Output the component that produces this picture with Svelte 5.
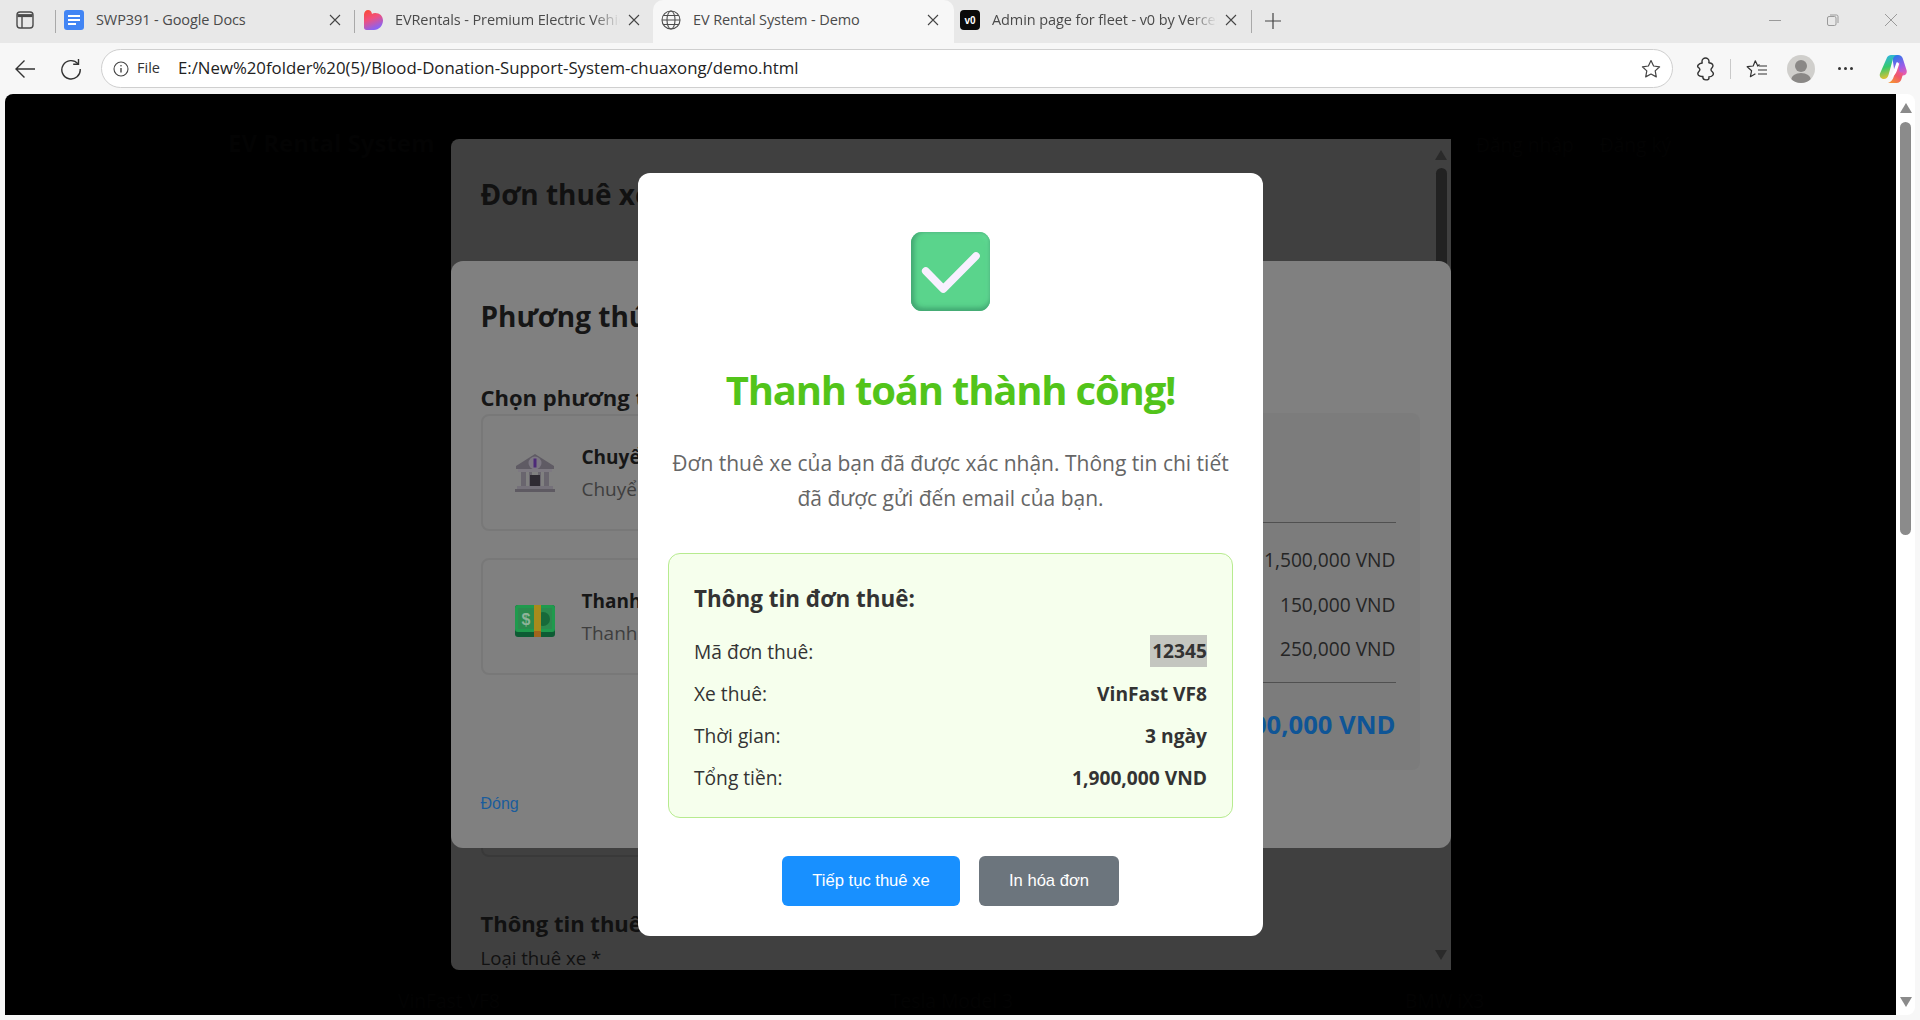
<script>
  const tabs = [
    { id: 'docs', title: 'SWP391 - Google Docs', fade: false },
    { id: 'heart', title: 'EVRentals - Premium Electric Vehicle Rental', fade: true },
    { id: 'globe', title: 'EV Rental System - Demo', fade: false, active: true },
    { id: 'v0', title: 'Admin page for fleet - v0 by Vercel', fade: true }
  ];

  const rows = [
    { label: 'Mã đơn thuê:', value: '12345', selected: true },
    { label: 'Xe thuê:', value: 'VinFast VF8' },
    { label: 'Thời gian:', value: '3 ngày' },
    { label: 'Tổng tiền:', value: '1,900,000 VND' }
  ];

  const prices = ['1,500,000 VND', '150,000 VND', '250,000 VND'];
</script>

<div class="window">
  <div class="tabstrip">
    <svg class="sidebar-ico" width="18" height="18" viewBox="0 0 18 18" fill="none" stroke="#4a4a4a" stroke-width="1.4">
      <rect x="1" y="1" width="16" height="16" rx="3" />
      <path d="M1.500 4.600h15" stroke-width="3" />
      <path d="M6 5v12" />
    </svg>
    {#each tabs as t}
      <div class="sep" class:hide={t.active || t.id === 'v0'}></div>
      <div class="tab tab-{t.id}" class:active={t.active}>
        <span class="fav">
          {#if t.id === 'docs'}
            <svg width="20" height="20" viewBox="0 0 20 20">
              <rect width="20" height="20" rx="3" fill="#4285f4" />
              <path d="M4 5h12v2H4zM4 9h12v2H4zM4 13h8v2H4z" fill="#fff" />
            </svg>
          {:else if t.id === 'heart'}
            <svg width="20" height="20" viewBox="0 0 20 20">
              <defs>
                <linearGradient id="hg" x1="0" y1="0" x2="0.4" y2="1">
                  <stop offset="0" stop-color="#fb4a2e" />
                  <stop offset="0.5" stop-color="#f0507e" />
                  <stop offset="1" stop-color="#8c62f0" />
                </linearGradient>
              </defs>
              <path d="M1 4.500C1 1.800 3 0 5 0c2.200 0 3.600 1.600 4 4 .9-.7 1.900-1 3.200-1C16.800 3 20 6 20 10.500c0 5-4 9.500-9 9.500H3.500C2 20 1 19 1 17.500z" fill="url(#hg)" />
            </svg>
          {:else if t.id === 'globe'}
            <svg width="20" height="20" viewBox="0 0 20 20" fill="none" stroke="#4d4d4d" stroke-width="1.1">
              <circle cx="10" cy="10" r="9" />
              <ellipse cx="10" cy="10" rx="4" ry="9" />
              <path d="M1 10h18M2.200 5.500h15.600M2.200 14.500h15.600" />
            </svg>
          {:else}
            <svg width="20" height="20" viewBox="0 0 20 20">
              <rect width="20" height="20" rx="4" fill="#0a0a0a" />
              <text x="10" y="13.500" class="v0-mark">v0</text>
            </svg>
          {/if}
        </span>
        <span class="tab-title" class:fade={t.fade}>{t.title}</span>
        <svg class="tab-x" width="12" height="12" viewBox="0 0 12 12" stroke="#444" stroke-width="1.1">
          <path d="M1 1l10 10M11 1L1 11" />
        </svg>
      </div>
    {/each}
    <div class="sep last"></div>
    <svg class="plus" width="18" height="18" viewBox="0 0 18 18" stroke="#444" stroke-width="1.2">
      <path d="M9 1v16M1 9h16" />
    </svg>
    <div class="win-controls">
      <svg width="12" height="12" viewBox="0 0 12 12" stroke="#9a9a9a"><path d="M0 6.500h12" /></svg>
      <svg width="12" height="12" viewBox="0 0 12 12" fill="none" stroke="#9a9a9a">
        <rect x="0.500" y="2.500" width="8.500" height="9" rx="1.500" />
        <path d="M3 1h6.500A1.500 1.500 0 0 1 11 2.500V9" />
      </svg>
      <svg width="12" height="12" viewBox="0 0 12 12" stroke="#9a9a9a"><path d="M0 0l12 12M12 0L0 12" /></svg>
    </div>
  </div>

  <div class="toolbar">
    <svg class="back" width="22" height="20" viewBox="0 0 22 20" fill="none" stroke="#333" stroke-width="1.400">
      <path d="M21 10H2M10.500 1.500L2 10l8.500 8.500" />
    </svg>
    <svg class="reload" width="22" height="22" viewBox="0 0 22 22" fill="none" stroke="#333" stroke-width="1.400">
      <path d="M18 5.800A9.200 9.200 0 1 0 20.200 11" />
      <path d="M18.500 1v5.300h-5.300" />
    </svg>
    <div class="addr">
      <svg class="info-ico" width="16" height="16" viewBox="0 0 16 16" fill="none" stroke="#444" stroke-width="1.100">
        <circle cx="8" cy="8" r="7" />
        <path d="M8 7v4.500" stroke-width="1.400" />
        <circle cx="8" cy="4.800" r="0.800" fill="#444" stroke="none" />
      </svg>
      <span class="file">File</span>
      <span class="url">E:/New%20folder%20(5)/Blood-Donation-Support-System-chuaxong/demo.html</span>
      <svg class="star" width="20" height="20" viewBox="0 0 20 20" fill="none" stroke="#444" stroke-width="1.200" stroke-linejoin="round">
        <path d="M10 1.500l2.600 5.500 6 .8-4.400 4.100 1.100 6L10 15l-5.300 2.900 1.100-6L1.400 7.800l6-.8z" />
      </svg>
    </div>
    <div class="tools">
      <svg class="t-puzzle" width="20" height="24" viewBox="0 0 20 24" fill="none" stroke="#333" stroke-width="1.400" stroke-linejoin="round">
        <path d="M7 4.500C7 2.500 8.700 1 10.500 1S14 2.500 14 4.500c0 .6 0 .8-.2 1.200 1.600.1 3 .7 3.700 1.600.6.900.5 2.200-.3 3.200-.8.900-1.200 1.500-1.200 2.200 0 .8.500 1.400 1.300 2.100 1.100 1 1.200 2.600.4 3.600-.8 1-2.200 1.500-3.900 1.500.2.500.2.700.2 1 0 1.100-1.300 2-3.100 2s-3.100-1.200-3.100-2.800c0-.2 0-.4.100-.6-1.900.2-3.500-.2-4.400-1.200-.9-1.100-.8-2.500.2-3.600.8-.9 1.200-1.400 1.200-2.100 0-.8-.5-1.400-1.300-2.200C2.500 10.400 2.400 9 3.200 8c.8-1 2.300-1.800 4-2C7.100 5.500 7 5 7 4.500z" />
      </svg>
      <div class="t-sep"></div>
      <svg class="t-fav" width="22" height="20" viewBox="0 0 22 20" fill="none" stroke="#333" stroke-width="1.200" stroke-linejoin="round">
        <path d="M13.500 5.500L11.800 7 9.300 1.800 7.200 7l-6 .7 4.400 4-1.200 6 5-3" />
        <path d="M13 7h8M12 11h9M12 15h9" />
      </svg>
      <div class="avatar">
        <span class="a-head"></span>
        <span class="a-body"></span>
      </div>
      <span class="dots"><i></i><i></i><i></i></span>
      <svg class="t-copilot" width="28" height="30" viewBox="0 0 28 30">
        <defs>
          <linearGradient id="cp1" x1="0.300" y1="0" x2="0.500" y2="1">
            <stop offset="0" stop-color="#2fb4ea" />
            <stop offset="0.5" stop-color="#37c96b" />
            <stop offset="1" stop-color="#f4c02e" />
          </linearGradient>
          <linearGradient id="cp2" x1="0.300" y1="0" x2="0.700" y2="1">
            <stop offset="0" stop-color="#2a78ea" />
            <stop offset="0.6" stop-color="#9a5ce8" />
            <stop offset="1" stop-color="#e85bb0" />
          </linearGradient>
          <linearGradient id="cp3" x1="0.800" y1="0" x2="0.300" y2="1">
            <stop offset="0" stop-color="#d85ad0" />
            <stop offset="0.6" stop-color="#f0586a" />
            <stop offset="1" stop-color="#f59035" />
          </linearGradient>
        </defs>
        <path d="M13 1h6c2.500 0 4 1.300 4.800 3.500L27.500 16c1 3-.8 5.500-3.800 5.500H16z" fill="url(#cp2)" />
        <path d="M8 3.500C8.700 2 10.500 1 12 1h6c-2 .5-3.300 1.800-4 3.800L9.500 21c-.8 2.800-2.300 4-4.500 4C2 25 0 22.500 1 19.500z" fill="url(#cp1)" />
        <path d="M21 8.500c-1 .2-2 1-2.500 2.500l-3.500 11c-1 3.500-3 6-6 7h8.500c2.500 0 4-1.200 4.800-3.500l2.200-7c-2 1-4.500-.5-4.500-3z" fill="url(#cp3)" />
        <path d="M17.500 8.500L12 23.500c3-1.500 4.800-3.500 5.800-6.500l2.200-6.500c.3-1.200-1.500-3-2.500-2z" fill="#fff" />
      </svg>
    </div>
  </div>

  <div class="viewport">
    <div class="page">
      <div class="dim-brand">EV Rental System</div>
      <div class="dim-nav"><span>Đăng nhập</span><span>Đăng ký</span></div>
      <div class="dim-cars"><span>VinFast VF8</span><span>Tesla Model 3</span><span>BMW iX3</span></div>

      <div class="overlay">
        <div class="rental-panel">
          <h2>Đơn thuê xe</h2>
          <div class="ghost-card"></div>
          <h3>Thông tin thuê</h3>
          <p>Loại thuê xe *</p>
          <div class="inner-scroll">
            <span class="arrow up"></span>
            <span class="thumb"></span>
            <span class="arrow down"></span>
          </div>
        </div>
      </div>

      <div class="overlay">
        <div class="pay-panel">
          <h2>Phương thức thanh toán</h2>
          <div class="pay-cols">
            <div class="methods">
              <h3>Chọn phương thức thanh toán</h3>
              <div class="method">
                <svg width="40" height="38" viewBox="0 0 40 38">
                  <path d="M20 0L39 12v3H1v-3z" fill="#5f5b64" />
                  <circle cx="20" cy="9" r="6.500" fill="#7c7782" />
                  <path d="M20 4.500v9" stroke="#4d2a78" stroke-width="3" />
                  <rect x="3" y="15" width="34" height="3" fill="#7d7981" />
                  <path d="M6 18h5v14H6zM14 18h3v14h-3zM23 18h3v14h-3zM29 18h5v14h-5z" fill="#69656e" />
                  <rect x="15" y="21" width="10" height="11" fill="#2f2b33" />
                  <rect x="2" y="32" width="36" height="3" fill="#75717a" />
                  <rect y="35" width="40" height="3" fill="#5e5a62" />
                </svg>
                <div>
                  <b>Chuyển khoản ngân hàng</b>
                  <span>Chuyển khoản qua ATM</span>
                </div>
              </div>
              <div class="method">
                <svg class="cash" width="40" height="32" viewBox="0 0 40 32">
                  <rect width="40" height="32" rx="3" fill="#0d5c34" />
                  <rect width="40" height="27" rx="3" fill="#1f9a4d" />
                  <rect x="3" y="3" width="34" height="21" fill="#2b8a4e" />
                  <circle cx="28" cy="14" r="7" fill="#176a3a" />
                  <text x="11" y="20" class="bill">$</text>
                  <rect x="19" y="0" width="7" height="32" fill="#a88b1c" />
                  <rect x="19" y="26" width="7" height="6" fill="#a0651c" />
                </svg>
                <div>
                  <b>Thanh toán tiền mặt</b>
                  <span>Thanh toán khi nhận xe</span>
                </div>
              </div>
              <a class="close-link" href="#top">Đóng</a>
            </div>
            <div class="summary">
              <h3>Tóm tắt</h3>
              <hr />
              {#each prices as p}
                <div class="price">{p}</div>
              {/each}
              <hr class="second" />
              <div class="total">1,900,000 VND</div>
            </div>
          </div>
        </div>
      </div>

      <div class="overlay">
        <div class="modal">
          <div class="check">
            <svg width="79" height="79" viewBox="0 0 79 79" fill="none" stroke="#f8f0ff" stroke-width="7.600" stroke-linecap="round" stroke-linejoin="round">
              <path d="M14.700 39L32.300 57 65 24" />
            </svg>
          </div>
          <h1>Thanh toán thành công!</h1>
          <p class="lead">Đơn thuê xe của bạn đã được xác nhận. Thông tin chi tiết đã được gửi đến email của bạn.</p>
          <div class="info">
            <h4>Thông tin đơn thuê:</h4>
            {#each rows as r}
              <div class="row">
                <span>{r.label}</span>
                <strong class:selected={r.selected}>{r.value}</strong>
              </div>
            {/each}
          </div>
          <div class="actions">
            <button class="primary">Tiếp tục thuê xe</button>
            <button class="secondary">In hóa đơn</button>
          </div>
        </div>
      </div>
    </div>
    <div class="page-scroll">
      <span class="arrow up"></span>
      <span class="thumb"></span>
      <span class="arrow down"></span>
    </div>
  </div>
</div>

<style>
  :global(body) {
    margin: 0;
    background: #f7f7f7;
    font-family: "Open Sans", "Liberation Sans", sans-serif;
  }
  .window {
    width: 1920px;
    height: 1020px;
    display: flex;
    flex-direction: column;
    overflow: hidden;
    background: #f7f7f7;
  }

  /* tabs */
  .tabstrip {
    height: 43px;
    flex: none;
    display: flex;
    align-items: center;
    background: #e8e8e8;
    padding-left: 16px;
  }
  .sidebar-ico { margin-top: -4px; margin-right: 21px; flex: none; }
  .sep { width: 1px; height: 23px; background: #a9a9a9; flex: none; margin-top: -1px; }
  .sep.hide { background: transparent; }
  .tab {
    display: flex;
    align-items: center;
    height: 43px;
    box-sizing: border-box;
    padding: 0 13px 4px 8px;
    font-size: 14.500px;
    letter-spacing: -0.1px;
    color: #4a4a4a;
    flex: none;
  }
  .tab-docs, .tab-heart { width: 298px; }
  .tab-globe { width: 301px; margin-left: -1px; padding-right: 15px; }
  .tab-v0 { width: 296px; padding-left: 5px; padding-right: 14px; }
  .tab.active {
    background: #f7f7f7;
    border-radius: 10px 10px 0 0;
  }
  .fav { width: 20px; height: 20px; flex: none; margin-right: 12px; }
  .fav svg { display: block; }
  .v0-mark { font: 700 10px "Liberation Sans", sans-serif; fill: #fff; text-anchor: middle; }
  .tab-title { flex: 1; white-space: nowrap; overflow: hidden; }
  .tab-title.fade {
    -webkit-mask-image: linear-gradient(to right, #000 88%, transparent);
    mask-image: linear-gradient(to right, #000 88%, transparent);
  }
  .tab-x { margin-left: 8px; flex: none; }
  .plus { margin-left: 12px; margin-top: -2px; flex: none; }
  .win-controls {
    margin-left: auto;
    display: flex;
    gap: 46px;
    padding-right: 23px;
    padding-bottom: 4px;
  }

  /* toolbar */
  .toolbar {
    height: 51px;
    flex: none;
    display: flex;
    align-items: center;
    padding-left: 14px;
    box-sizing: border-box;
    background: #f7f7f7;
  }
  .back { flex: none; }
  .reload { flex: none; margin-left: 24px; }
  .addr {
    margin-left: 19px;
    width: 1572px;
    height: 39px;
    box-sizing: border-box;
    flex: none;
    border: 1px solid #cfcfcf;
    border-radius: 20px;
    background: #fff;
    display: flex;
    align-items: center;
    padding: 0 11px 2px 11px;
  }
  .info-ico { margin-top: 2px; }
  .file { font-size: 14.500px; margin-left: 8px; color: #333; }
  .url { font-size: 16.800px; margin-left: 18px; color: #222; white-space: nowrap; }
  .star { margin-left: auto; margin-top: 2px; }
  .tools { display: flex; align-items: center; flex: none; }
  .t-puzzle { margin-left: 22px; }
  .t-sep { width: 1px; height: 20px; background: #c9c9c9; margin-left: 15px; }
  .t-fav { margin-left: 15px; }
  .avatar {
    width: 28px;
    height: 28px;
    border-radius: 50%;
    background: #d0cfcc;
    margin-left: 19px;
    position: relative;
    overflow: hidden;
    flex: none;
  }
  .a-head {
    position: absolute;
    left: 8px;
    top: 5px;
    width: 12px;
    height: 12px;
    border-radius: 50%;
    background: #8a8886;
  }
  .a-body {
    position: absolute;
    left: 4px;
    top: 18px;
    width: 20px;
    height: 14px;
    border-radius: 50%;
    background: #8a8886;
  }
  .dots { display: flex; gap: 3px; margin-left: 23px; }
  .dots i { width: 3px; height: 3px; border-radius: 50%; background: #333; }
  .t-copilot { margin-left: 26px; flex: none; }

  /* page */
  .viewport {
    height: 921px;
    flex: none;
    display: flex;
    padding-left: 5px;
  }
  .page {
    width: 1891px;
    height: 921px;
    flex: none;
    position: relative;
    background: #000;
    border-radius: 8px 0 0 0;
    overflow: hidden;
  }
  .page-scroll {
    width: 19px;
    height: 921px;
    background: #fff;
    position: relative;
    border-radius: 0 8px 8px 0;
  }
  .page-scroll .thumb {
    position: absolute;
    left: 4px;
    top: 28px;
    width: 11px;
    height: 413px;
    border-radius: 6px;
    background: #8b8b8b;
  }
  .arrow {
    position: absolute;
    width: 0;
    height: 0;
    border-left: 6px solid transparent;
    border-right: 6px solid transparent;
  }
  .page-scroll .arrow { left: 4px; }
  .page-scroll .arrow.up { top: 9px; border-bottom: 10px solid #8b8b8b; }
  .page-scroll .arrow.down { top: 903px; border-top: 10px solid #8b8b8b; }

  /* barely visible text of the page under the backdrop */
  .dim-brand, .dim-nav, .dim-cars { position: absolute; color: #030303; white-space: nowrap; font-size: 19.200px; }
  .dim-brand { left: 223px; top: 32px; font-size: 24px; font-weight: 700; }
  .dim-nav { left: 1471px; top: 37px; display: flex; gap: 26px; }
  .dim-cars { left: 393px; top: 893px; display: flex; }
  .dim-cars span:nth-child(1) { width: 492px; }
  .dim-cars span:nth-child(2) { width: 515px; }

  .overlay {
    position: absolute;
    inset: 0;
    display: flex;
    align-items: center;
    justify-content: center;
  }

  .rental-panel {
    width: 1000px;
    height: 831px;
    box-sizing: border-box;
    background: #404040;
    border-radius: 8px 0 0 8px;
    padding: 35px 30px 0;
    position: relative;
    overflow: hidden;
    color: #111;
  }
  .rental-panel h2 { margin: 0; font-size: 28px; line-height: 40px; font-weight: 700; }
  .ghost-card {
    width: 600px;
    height: 110px;
    box-sizing: border-box;
    margin-top: 533px;
    border: 2px solid #393939;
    border-top: 0;
    border-radius: 8px;
  }
  .rental-panel h3 { margin: 50px 0 0; font-size: 22px; line-height: 32px; font-weight: 700; }
  .rental-panel p { margin: 6px 0 0; font-size: 18.600px; line-height: 26px; }
  .inner-scroll { position: absolute; right: 0; top: 0; width: 19px; height: 100%; }
  .inner-scroll .thumb {
    position: absolute;
    left: 4px;
    top: 29px;
    width: 11px;
    height: 300px;
    border-radius: 6px;
    background: #222;
  }
  .inner-scroll .arrow { left: 3px; }
  .inner-scroll .arrow.up { top: 11px; border-bottom: 10px solid #2a2a2a; }
  .inner-scroll .arrow.down { top: 811px; border-top: 10px solid #2a2a2a; }

  .pay-panel {
    width: 1000px;
    height: 587px;
    box-sizing: border-box;
    background: #808080;
    border-radius: 12px;
    padding: 35px 30px 0;
    color: #161616;
  }
  .pay-panel h2 { margin: 0; font-size: 28px; line-height: 40px; font-weight: 700; }
  .pay-cols { display: flex; gap: 30px; margin-top: 47px; }
  .methods { flex: 1; min-width: 0; }
  .methods h3 { margin: 0 0 3px; font-size: 22px; line-height: 28px; font-weight: 700; white-space: nowrap; }
  .method {
    height: 117px;
    box-sizing: border-box;
    border: 2px solid #787878;
    border-radius: 8px;
    display: flex;
    align-items: center;
    gap: 27px;
    padding-left: 32px;
    margin-bottom: 27px;
  }
  .method svg { flex: none; }
  .method .cash { margin-top: 8px; }
  .bill { font: 700 16px "Liberation Sans", sans-serif; fill: #8fb39a; text-anchor: middle; }
  .method b, .method span { display: block; font-size: 19px; line-height: 32px; white-space: nowrap; }
  .method span { color: #3e3e3e; }
  .close-link {
    display: block;
    margin-top: 120px;
    font: 16px "Liberation Sans", sans-serif;
    color: #1a5c9c;
    text-decoration: none;
  }
  .summary {
    width: 400px;
    height: 357px;
    box-sizing: border-box;
    flex: none;
    margin: 30px 1px 0 0;
    background: #7c7c7c;
    border-radius: 8px;
    padding: 20px 24px;
  }
  .summary h3 { margin: 0 0 73px; font-size: 20px; line-height: 16px; font-weight: 700; }
  .summary hr { border: 0; border-top: 1px solid #505050; margin: 0 0 24px; }
  .summary hr.second { margin: 1.500px 0 21px; }
  .price { text-align: right; font-size: 19.200px; line-height: 26px; height: 44.500px; color: #252525; }
  .total { text-align: right; font-size: 25.600px; line-height: 42px; font-weight: 700; color: #0f5596; white-space: nowrap; }

  /* success modal */
  .modal {
    width: 625px;
    height: 763px;
    box-sizing: border-box;
    background: #fff;
    border-radius: 12px;
    padding: 59px 30px 0;
    display: flex;
    flex-direction: column;
    align-items: stretch;
    text-align: center;
  }
  .check {
    width: 79px;
    height: 79px;
    margin: 0 auto;
    border-radius: 11px;
    background: #5ad48c;
    box-shadow:
      inset 3px 0 5px #43a873,
      inset 0 -3px 5px #43a873,
      inset -2px 2px 4px #6ae09c;
  }
  .check svg { display: block; }
  h1 {
    margin: 51px 0 0;
    font-size: 40px;
    line-height: 56px;
    letter-spacing: -1.200px;
    font-weight: 700;
    color: #52c41a;
  }
  .lead {
    margin: 28px 0 0;
    font-size: 21px;
    line-height: 35px;
    color: #666;
  }
  .info {
    margin-top: 37px;
    height: 265px;
    box-sizing: border-box;
    background: #f6ffed;
    border: 1px solid #b7eb8f;
    border-radius: 12px;
    padding: 30px 25px 0;
    text-align: left;
    color: #333;
  }
  h4 { margin: 0 0 16px; font-size: 22.400px; line-height: 30px; font-weight: 700; }
  .row {
    display: flex;
    justify-content: space-between;
    align-items: center;
    height: 42px;
    font-size: 19.200px;
  }
  .row strong { font-weight: 700; color: #333; }
  .row strong.selected { background: #c4c6c0; line-height: 32px; padding-left: 2px; }
  .actions {
    display: flex;
    justify-content: center;
    gap: 19px;
    margin-top: 38px;
  }
  button {
    height: 50px;
    border: 0;
    border-radius: 6px;
    color: #fff;
    font: 16.600px "Liberation Sans", sans-serif;
    padding: 0;
  }
  .primary { width: 178px; background: #1890ff; }
  .secondary { width: 140px; background: #6c757d; }
</style>
